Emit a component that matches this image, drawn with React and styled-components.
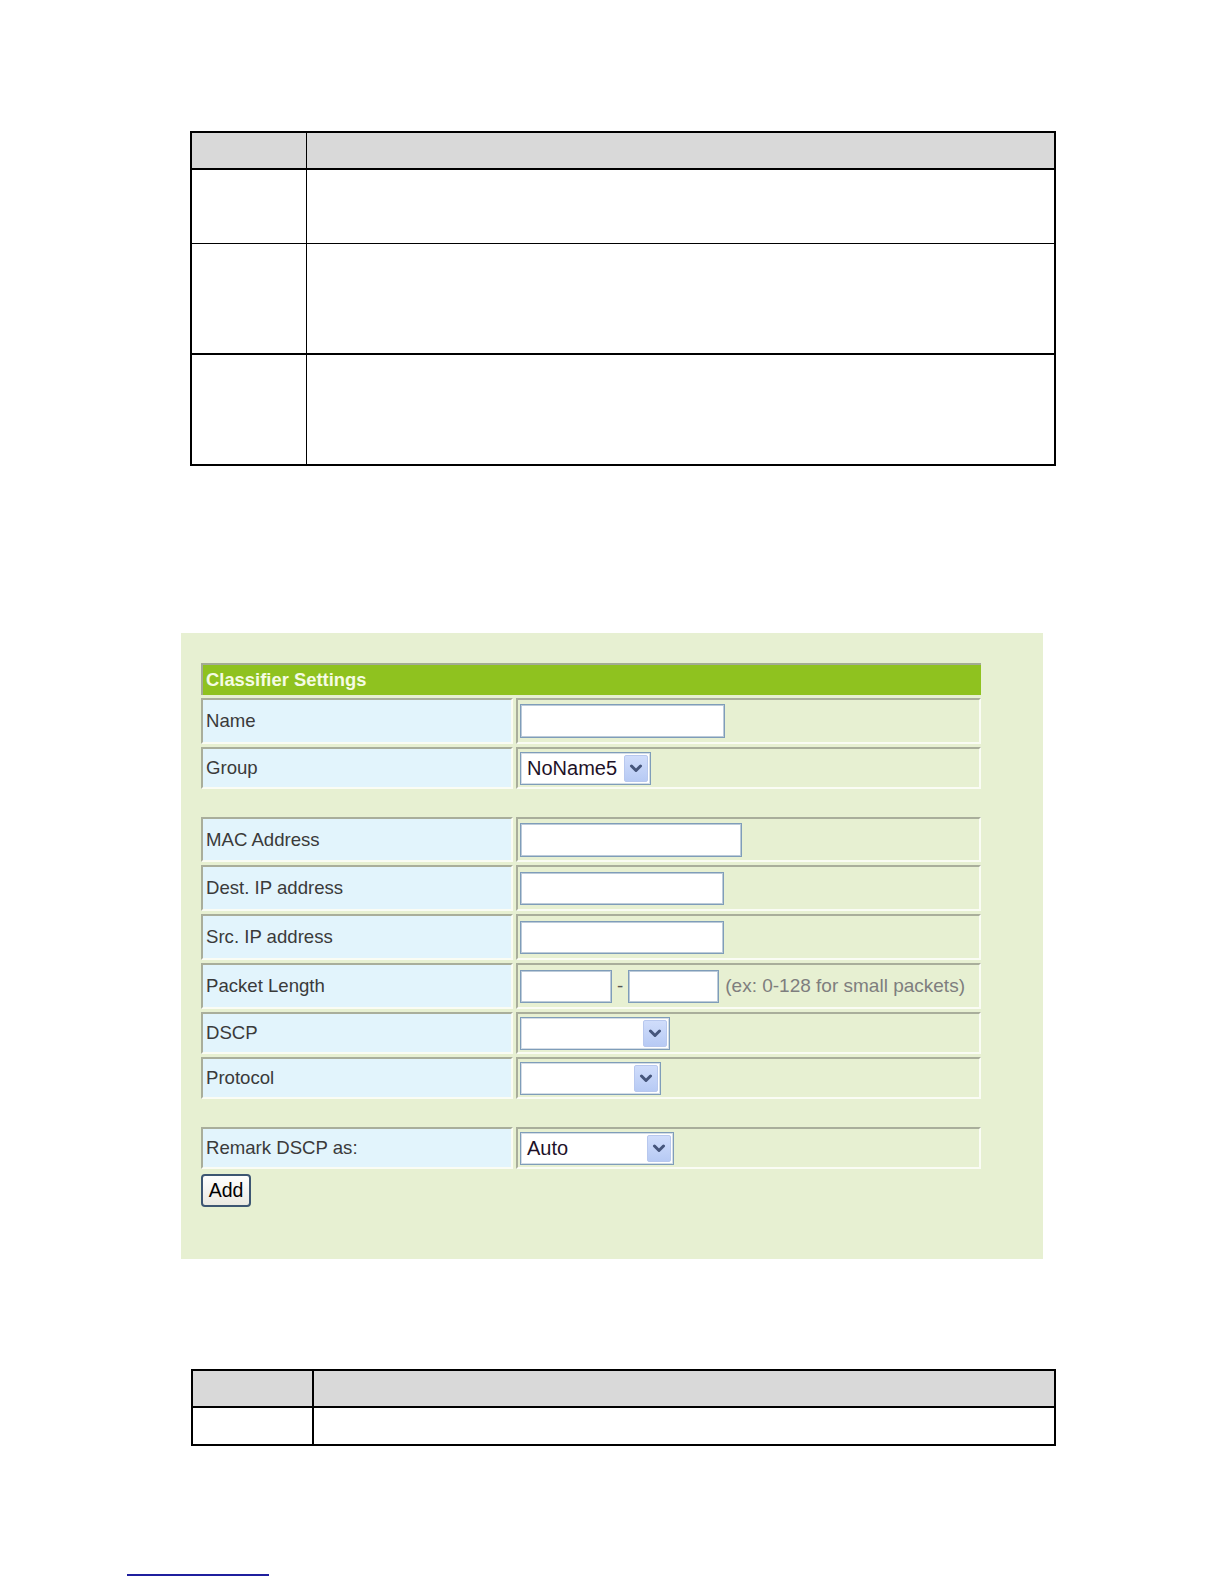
import React from "react";
import styled, { createGlobalStyle } from "styled-components";

const GlobalStyle = createGlobalStyle`
  html, body {
    margin: 0;
    padding: 0;
    background: #fff;
  }
  body {
    font-family: "Liberation Sans", Arial, sans-serif;
  }
`;

const ChevronDown = () => (
  <svg width="14" height="9" viewBox="0 0 14 9">
    <path
      d="M2.5 2 L7 6.5 L11.5 2"
      fill="none"
      stroke="#45557b"
      strokeWidth="3"
      strokeLinecap="round"
      strokeLinejoin="round"
    />
  </svg>
);

const Select = ({ width, value }) => (
  <SelectBox $w={width}>
    <SelectText>{value}</SelectText>
    <ArrowButton>
      <ChevronDown />
    </ArrowButton>
  </SelectBox>
);

const Field = ({ label, height, children }) => (
  <FieldRow $h={height}>
    <LabelCell>{label}</LabelCell>
    <ValueCell>{children}</ValueCell>
  </FieldRow>
);

const App = () => {
  return (
    <Page>
      <GlobalStyle />

      <DocTable $left={190} $width={866}>
        <DocRow $h={37} $line={2} $head $first={115} $divider={1}>
          <DocCell />
          <DocCell />
        </DocRow>
        <DocRow $h={74} $line={1} $first={115} $divider={1}>
          <DocCell />
          <DocCell />
        </DocRow>
        <DocRow $h={111} $line={2} $first={115} $divider={1}>
          <DocCell />
          <DocCell />
        </DocRow>
        <DocRow $h={109} $line={0} $first={115} $divider={1}>
          <DocCell />
          <DocCell />
        </DocRow>
      </DocTable>

      <Panel>
        <Form>
          <HeaderBar>Classifier Settings</HeaderBar>
          <Field label="Name" height={46}>
            <TextInput $w={205} $h={34} />
          </Field>
          <Field label="Group" height={42}>
            <Select width={131} value="NoName5" />
          </Field>

          <Spacer />

          <Field label="MAC Address" height={45}>
            <TextInput $w={222} $h={34} />
          </Field>
          <Field label="Dest. IP address" height={46}>
            <TextInput $w={204} $h={33} />
          </Field>
          <Field label="Src. IP address" height={46}>
            <TextInput $w={204} $h={33} />
          </Field>
          <Field label="Packet Length" height={46}>
            <TextInput $w={92} $h={33} />
            <Dash>-</Dash>
            <TextInput $w={91} $h={33} />
            <Hint>(ex: 0-128 for small packets)</Hint>
          </Field>
          <Field label="DSCP" height={42}>
            <Select width={150} value="" />
          </Field>
          <Field label="Protocol" height={42}>
            <Select width={141} value="" />
          </Field>

          <Spacer />

          <Field label="Remark DSCP as:" height={42}>
            <Select width={154} value="Auto" />
          </Field>
        </Form>
        <AddButton type="button">Add</AddButton>
      </Panel>

      <DocTable $left={191} $width={865} $gap={110}>
        <DocRow $h={37} $line={2} $head $first={121} $divider={2}>
          <DocCell />
          <DocCell />
        </DocRow>
        <DocRow $h={36} $line={0} $first={121} $divider={2}>
          <DocCell />
          <DocCell />
        </DocRow>
      </DocTable>

      <FootRule />
    </Page>
  );
};

export default App;

const Page = styled.div`
  width: 1224px;
  min-height: 1584px;
  padding-top: 131px;
  box-sizing: border-box;
  display: flex;
  flex-direction: column;
  align-items: flex-start;
`;

const DocTable = styled.div`
  margin-left: ${(p) => p.$left}px;
  margin-top: ${(p) => p.$gap || 0}px;
  width: ${(p) => p.$width}px;
  border: 2px solid #000;
  box-sizing: border-box;
  display: flex;
  flex-direction: column;
`;

const DocRow = styled.div`
  height: ${(p) => p.$h}px;
  box-sizing: border-box;
  display: grid;
  grid-template-columns: ${(p) => p.$first}px 1fr;
  border-bottom: ${(p) => p.$line}px solid #000;
  background: ${(p) => (p.$head ? "#d9d9d9" : "#fff")};

  & > div:first-child {
    border-right: ${(p) => p.$divider}px solid #000;
  }
`;

const DocCell = styled.div`
  box-sizing: border-box;
`;

const Panel = styled.div`
  margin-left: 181px;
  margin-top: 167px;
  width: 862px;
  box-sizing: border-box;
  padding: 30px 0 52px 20px;
  background: #e7f0d2;
  display: flex;
  flex-direction: column;
  align-items: flex-start;
`;

const Form = styled.div`
  width: 780px;
  display: flex;
  flex-direction: column;
  gap: 3px;
`;

const HeaderBar = styled.div`
  height: 32px;
  box-sizing: border-box;
  border-top: 2px solid #a3ab93;
  border-left: 2px solid #a3ab93;
  background: #8fc21f;
  color: #f5fbe4;
  font-weight: bold;
  font-size: 18.4px;
  padding-left: 3px;
  display: flex;
  align-items: center;
`;

const FieldRow = styled.div`
  height: ${(p) => p.$h}px;
  display: grid;
  grid-template-columns: 312px 465px;
  column-gap: 3px;
`;

const Cell = styled.div`
  box-sizing: border-box;
  border-style: solid;
  border-width: 2px;
  border-color: #a9ae9b #fafcf4 #fafcf4 #a9ae9b;
  display: flex;
  align-items: center;
`;

const LabelCell = styled(Cell)`
  background: #e2f4fc;
  padding-left: 3px;
  color: #3a3a3a;
  font-size: 18.6px;
`;

const ValueCell = styled(Cell)`
  background: #e7f0d2;
  padding-left: 2px;
`;

const Spacer = styled.div`
  height: 22px;
`;

const TextInput = styled.input`
  width: ${(p) => p.$w}px;
  height: ${(p) => p.$h}px;
  box-sizing: border-box;
  margin: 0;
  padding: 0;
  border: 1px solid #7f9db9;
  box-shadow: inset 0 0 0 1px #bccbd9;
  background: #fff;
  outline: none;
`;

const SelectBox = styled.div`
  width: ${(p) => p.$w}px;
  height: 33px;
  box-sizing: border-box;
  border: 1px solid #7f9db9;
  box-shadow: inset 0 0 0 1px #d4dde6;
  background: #fff;
  padding: 2px;
  display: flex;
  align-items: stretch;
`;

const SelectText = styled.div`
  flex: 1;
  padding-left: 4px;
  display: flex;
  align-items: center;
  font-size: 20px;
  color: #1e1228;
  white-space: nowrap;
`;

const ArrowButton = styled.div`
  width: 24px;
  box-sizing: border-box;
  border: 1px solid #b8c8ee;
  border-radius: 2px;
  background: linear-gradient(#d0ddfb, #b7caf4);
  display: flex;
  align-items: center;
  justify-content: center;
`;

const Dash = styled.span`
  margin: 0 5px;
  color: #555;
  font-size: 18.8px;
`;

const Hint = styled.span`
  margin-left: 6px;
  color: #7e7e7e;
  font-size: 19px;
  white-space: nowrap;
`;

const AddButton = styled.button`
  margin-top: 5px;
  width: 50px;
  height: 33px;
  padding: 0;
  box-sizing: border-box;
  border: 2px solid #3d5672;
  border-radius: 4px;
  background: linear-gradient(#fefefe, #ebeae2);
  font-family: "Liberation Sans", Arial, sans-serif;
  font-size: 19.5px;
  color: #000;
`;

const FootRule = styled.div`
  margin-left: 127px;
  margin-top: 128px;
  width: 142px;
  border-top: 2px solid #1f1f9e;
`;
